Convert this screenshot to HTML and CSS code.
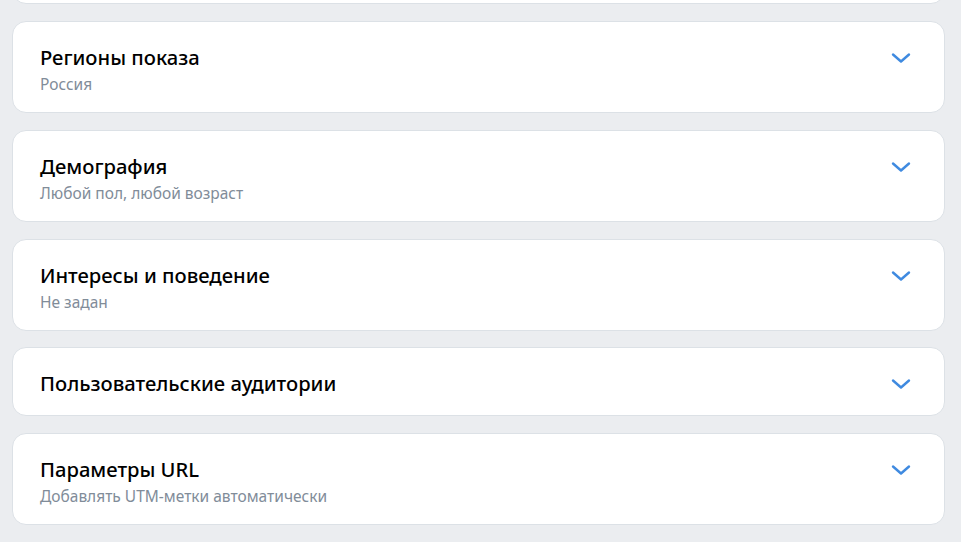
FILE: index.html
```html
<!DOCTYPE html>
<html lang="ru">
<head>
<meta charset="utf-8">
<link rel="stylesheet" href="styles.css">
</head>
<body>
<div class="list">
  <div class="card card-top"></div>
  <div class="card">
    <div class="text">
      <div class="title">Регионы показа</div>
      <div class="sub">Россия</div>
    </div>
    <svg class="chev" width="20" height="12" viewBox="0 0 20 12"><path d="M2 2.5 L10 9.5 L18 2.5" fill="none" stroke="#3f8ae0" stroke-width="2.4" stroke-linecap="round" stroke-linejoin="round"/></svg>
  </div>
  <div class="card">
    <div class="text">
      <div class="title">Демография</div>
      <div class="sub">Любой пол, любой возраст</div>
    </div>
    <svg class="chev" width="20" height="12" viewBox="0 0 20 12"><path d="M2 2.5 L10 9.5 L18 2.5" fill="none" stroke="#3f8ae0" stroke-width="2.4" stroke-linecap="round" stroke-linejoin="round"/></svg>
  </div>
  <div class="card">
    <div class="text">
      <div class="title">Интересы и поведение</div>
      <div class="sub">Не задан</div>
    </div>
    <svg class="chev" width="20" height="12" viewBox="0 0 20 12"><path d="M2 2.5 L10 9.5 L18 2.5" fill="none" stroke="#3f8ae0" stroke-width="2.4" stroke-linecap="round" stroke-linejoin="round"/></svg>
  </div>
  <div class="card">
    <div class="text">
      <div class="title">Пользовательские аудитории</div>
    </div>
    <svg class="chev" width="20" height="12" viewBox="0 0 20 12"><path d="M2 2.5 L10 9.5 L18 2.5" fill="none" stroke="#3f8ae0" stroke-width="2.4" stroke-linecap="round" stroke-linejoin="round"/></svg>
  </div>
  <div class="card">
    <div class="text">
      <div class="title">Параметры URL</div>
      <div class="sub">Добавлять UTM-метки автоматически</div>
    </div>
    <svg class="chev" width="20" height="12" viewBox="0 0 20 12"><path d="M2 2.5 L10 9.5 L18 2.5" fill="none" stroke="#3f8ae0" stroke-width="2.4" stroke-linecap="round" stroke-linejoin="round"/></svg>
  </div>
</div>
</body>
</html>
```
FILE: styles.css
```css
html, body {
  margin: 0;
  padding: 0;
  background: #ebedf0;
  font-family: "Noto Sans", "Open Sans", sans-serif;
  overflow: hidden;
}
.list {
  display: flex;
  flex-direction: column;
  gap: 16.8px;
  padding: 0 16px 0 12px;
  margin-top: -60.8px;
}
.card {
  background: #fff;
  border: 1px solid #dce1e6;
  border-radius: 14px;
  padding: 21px 33px 18px 27px;
  display: flex;
  align-items: flex-start;
  justify-content: space-between;
}
.card-top {
  height: 24px;
}
.text {
  display: flex;
  flex-direction: column;
  gap: 3px;
}
.title {
  font-size: 20.2px;
  line-height: 28px;
  font-weight: 500;
  color: #000;
}
.sub {
  font-size: 15.5px;
  line-height: 20px;
  color: #818c99;
}
.chev {
  display: block;
  margin-top: 9px;
}
```
